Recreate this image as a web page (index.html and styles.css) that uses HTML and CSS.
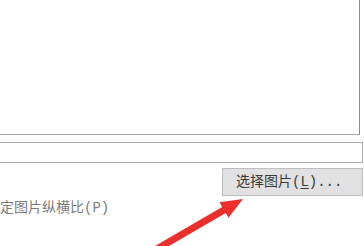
FILE: index.html
```html
<!DOCTYPE html>
<html>
<head>
<meta charset="utf-8">
<link rel="stylesheet" href="styles.css">
</head>
<body>
<div class="page">
  <div class="box1"></div>
  <div class="box2"></div>
  <div class="btn-row"><div class="btn">选择图片(<u>L</u>)...</div></div>
  <div class="label">定图片纵横比(P)</div>
  <svg class="arrow" width="364" height="246" viewBox="0 0 364 246">
    <polygon points="243,199 228.5,217.8 225.8,213 155.2,254 151.6,248 222.2,207 219.5,202.2" fill="#ea2f2c"/>
  </svg>
</div>
</body>
</html>
```

FILE: styles.css
```css
html, body {
  margin: 0;
  padding: 0;
  background: #ffffff;
}
.page {
  position: relative;
  width: 364px;
  height: 246px;
  overflow: hidden;
  font-family: "Liberation Mono", "Noto Sans CJK SC", monospace;
}
.box1 {
  width: 359px;
  height: 134px;
  border-right: 1px solid #8e8e8e;
  border-bottom: 1px solid #a9a9a9;
}
.box2 {
  margin-top: 7px;
  width: 362px;
  height: 19px;
  border-top: 1px solid #aaaaaa;
  border-bottom: 1px solid #aaaaaa;
  border-right: 1px solid #aaaaaa;
}
.btn-row {
  margin-top: 5px;
  display: flex;
  padding-left: 222px;
}
.btn {
  box-sizing: border-box;
  width: 141px;
  height: 28px;
  background: #e1e1e1;
  border: 1px solid #bdbdbd;
  padding-left: 13px;
  font-size: 14px;
  line-height: 26px;
  color: #3a3a3a;
  white-space: nowrap;
}
.btn u {
  text-decoration: underline;
  text-underline-offset: 2px;
}
.label {
  margin-top: 2px;
  font-size: 14px;
  line-height: 20px;
  color: #7d7d7d;
  white-space: nowrap;
}
.arrow {
  position: absolute;
  left: 0;
  top: 0;
}
```
